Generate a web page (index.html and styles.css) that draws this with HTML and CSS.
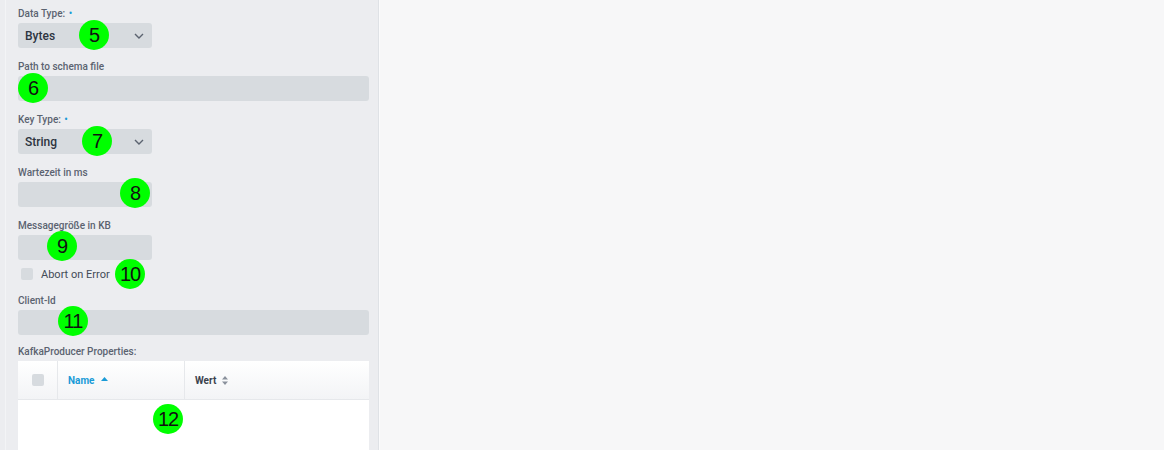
FILE: index.html
```html
<!DOCTYPE html>
<html lang="de">
<head>
  <meta charset="UTF-8" />
  <title>Producer Settings</title>
  <link rel="stylesheet" href="styles.css">
</head>
<body>
  <div class="layout">
    <aside class="panel">
      <div class="field">
        <label class="field-label">Data Type: <span class="req">•</span></label>
        <div class="select short"><span>Bytes</span>
          <svg class="chev" width="10" height="6" viewBox="0 0 10 6"><path d="M1 1l4 4 4-4" fill="none" stroke="#5b6370" stroke-width="1.4"/></svg>
        </div>
      </div>

      <div class="field">
        <label class="field-label">Path to schema file</label>
        <div class="input"></div>
      </div>

      <div class="field">
        <label class="field-label">Key Type: <span class="req">•</span></label>
        <div class="select short"><span>String</span>
          <svg class="chev" width="10" height="6" viewBox="0 0 10 6"><path d="M1 1l4 4 4-4" fill="none" stroke="#5b6370" stroke-width="1.4"/></svg>
        </div>
      </div>

      <div class="field">
        <label class="field-label">Wartezeit in ms</label>
        <div class="input short"></div>
      </div>

      <div class="field">
        <label class="field-label">Messagegröße in KB</label>
        <div class="input short"></div>
      </div>

      <div class="check-row">
        <span class="checkbox"></span>
        <span class="check-text">Abort on Error</span>
      </div>

      <div class="field tight">
        <label class="field-label">Client-Id</label>
        <div class="input"></div>
      </div>

      <div class="field">
        <label class="field-label">KafkaProducer Properties:</label>
        <div class="table">
          <div class="thead">
            <div class="th th-check"><span class="checkbox"></span></div>
            <div class="th th-name">Name
              <svg class="sort-up" width="7" height="4" viewBox="0 0 7 4"><path d="M3.5 0L7 4H0z" fill="#1a9bd7"/></svg>
            </div>
            <div class="th th-value">Wert
              <svg class="sort-both" width="6" height="9" viewBox="0 0 6 9"><path d="M3 0L6 3.5H0z M3 9L0 5.5H6z" fill="#8a919c"/></svg>
            </div>
          </div>
          <div class="tbody"></div>
        </div>
      </div>

      <span class="marker" style="left:79px;top:20px">5</span>
      <span class="marker" style="left:18px;top:73px">6</span>
      <span class="marker" style="left:82px;top:126px">7</span>
      <span class="marker" style="left:120px;top:178px">8</span>
      <span class="marker" style="left:47px;top:231px">9</span>
      <span class="marker" style="left:115px;top:259px">10</span>
      <span class="marker" style="left:58px;top:306px">11</span>
      <span class="marker" style="left:153px;top:404px">12</span>
    </aside>
    <div class="content"></div>
  </div>
</body>
</html>
```

FILE: styles.css
```css
body {
  margin: 0;
  font-family: Roboto, "Liberation Sans", sans-serif;
  background-color: #f7f7f8;
  height: 450px;
  overflow: hidden;
}

.layout {
  display: flex;
  height: 450px;
}

.panel {
  position: relative;
  flex: 0 0 379px;
  padding: 5px 9px 0 18px;
  box-sizing: border-box;
  background: linear-gradient(to right, #ecedf0 5px, #f3f4f6 5px, #f3f4f6 6px, #ecedf0 6px);
  border-right: 1px solid #dfe2e6;
  overflow: hidden;
}

.content {
  flex: 1;
  border-left: 1px solid #fbfbfc;
}

.field {
  display: flex;
  flex-direction: column;
  margin-bottom: 10px;
}

.field.tight {
  margin-bottom: 8px;
}

.field-label {
  font-size: 10px;
  line-height: 14px;
  height: 14px;
  padding-top: 2px;
  margin-bottom: 2px;
  font-weight: 500;
  color: #5b6370;
}

.req {
  color: #1a9bd7;
  font-size: 10px;
  margin-left: 1px;
}

.select,
.input {
  height: 25px;
  background-color: #d7dbdf;
  border-radius: 3px;
  box-sizing: border-box;
}

.short {
  width: 134px;
}

.select {
  display: flex;
  align-items: center;
  justify-content: space-between;
  padding: 0 8px 0 7px;
  font-size: 12px;
  font-weight: 500;
  color: #2d3440;
}

.chev {
  margin-top: 1px;
}

.check-row {
  display: flex;
  align-items: center;
  height: 20px;
  margin: -6px 0 8px 3px;
}

.checkbox {
  display: inline-block;
  width: 12px;
  height: 12px;
  border-radius: 2px;
  background-color: #d7dbdf;
}

.check-text {
  margin-left: 8px;
  font-size: 11px;
  color: #434b57;
}

.table {
  background-color: #ffffff;
  border-radius: 3px 3px 0 0;
  height: 100px;
}

.thead {
  display: flex;
  height: 38px;
  background: linear-gradient(#ffffff, #f3f4f6);
  border-bottom: 1px solid #e6e8eb;
}

.th {
  display: flex;
  align-items: center;
  font-size: 10px;
  font-weight: 700;
  color: #3b424d;
}

.th-check {
  width: 39px;
  justify-content: center;
  border-right: 1px solid #e6e8eb;
}

.th-name {
  width: 116px;
  padding-left: 10px;
  color: #1a9bd7;
  border-right: 1px solid #e6e8eb;
}

.th-value {
  flex: 1;
  padding-left: 10px;
}

.sort-up {
  margin-left: 7px;
  margin-top: -3px;
}

.sort-both {
  margin-left: 6px;
}

.marker {
  position: absolute;
  width: 30px;
  height: 30px;
  border-radius: 50%;
  background-color: #00ff00;
  color: #111;
  font-family: "Liberation Sans", sans-serif;
  font-size: 20px;
  line-height: 30px;
  text-align: center;
  letter-spacing: -1px;
}
```
